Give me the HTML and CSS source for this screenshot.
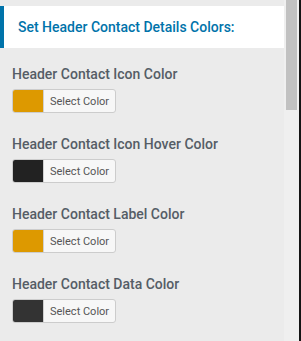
FILE: index.html
```html
<!DOCTYPE html>
<html>
<head>
<meta charset="utf-8">
<link rel="stylesheet" href="styles.css">
</head>
<body>
<div class="frame">
  <div class="content">
    <div class="heading">Set Header Contact Details Colors:</div>
    <div class="field">
      <div class="label">Header Contact Icon Color</div>
      <button class="picker"><span class="swatch orange"></span><span class="picker-text">Select Color</span></button>
    </div>
    <div class="field">
      <div class="label">Header Contact Icon Hover Color</div>
      <button class="picker"><span class="swatch dark1"></span><span class="picker-text">Select Color</span></button>
    </div>
    <div class="field">
      <div class="label">Header Contact Label Color</div>
      <button class="picker"><span class="swatch orange"></span><span class="picker-text">Select Color</span></button>
    </div>
    <div class="field">
      <div class="label">Header Contact Data Color</div>
      <button class="picker"><span class="swatch dark2"></span><span class="picker-text">Select Color</span></button>
    </div>
  </div>
  <div class="scrollbar"><div class="thumb"></div></div>
  <div class="edge"></div>
</div>
</body>
</html>
```
FILE: styles.css
```css
html, body {
  margin: 0;
  padding: 0;
  width: 301px;
  height: 341px;
  overflow: hidden;
  background: #ebebeb;
  font-family: Roboto, "Noto Sans", Arial, sans-serif;
}
.frame {
  display: flex;
  width: 301px;
  height: 341px;
}
.content {
  width: 284px;
  flex: none;
  padding-top: 6px;
  box-sizing: border-box;
  display: flex;
  flex-direction: column;
  gap: 23px;
}
.heading {
  background: #fff;
  border-left: 4px solid #0073aa;
  height: 42px;
  box-sizing: border-box;
  padding-left: 14px;
  display: flex;
  align-items: center;
  font-size: 14px;
  font-weight: 500;
  color: #0073aa;
  margin-bottom: -5px;
}
.field {
  padding-left: 12px;
  display: flex;
  flex-direction: column;
  align-items: flex-start;
  gap: 7px;
}
.label {
  font-size: 14px;
  line-height: 16px;
  font-weight: 500;
  color: #555d66;
}
.picker {
  display: flex;
  align-items: center;
  height: 24px;
  padding: 0;
  margin: 0;
  border: 1px solid #cccccc;
  border-radius: 3px;
  background: #f7f7f7;
  box-sizing: border-box;
  width: 104px;
  overflow: hidden;
  font-family: inherit;
}
.swatch {
  width: 30px;
  height: 22px;
  flex: none;
  border-right: 1px solid #d0d0d0;
}
.orange { background: #dd9900; }
.dark1 { background: #222222; }
.dark2 { background: #333333; }
.picker-text {
  font-size: 11px;
  color: #555555;
  padding-left: 6px;
}
.scrollbar {
  width: 15px;
  flex: none;
  background: #efefef;
  padding-left: 2px;
  box-sizing: border-box;
}
.thumb {
  width: 11px;
  height: 110px;
  background: #c1c1c1;
}
.edge {
  width: 2px;
  flex: none;
  background: #141414;
}
```
